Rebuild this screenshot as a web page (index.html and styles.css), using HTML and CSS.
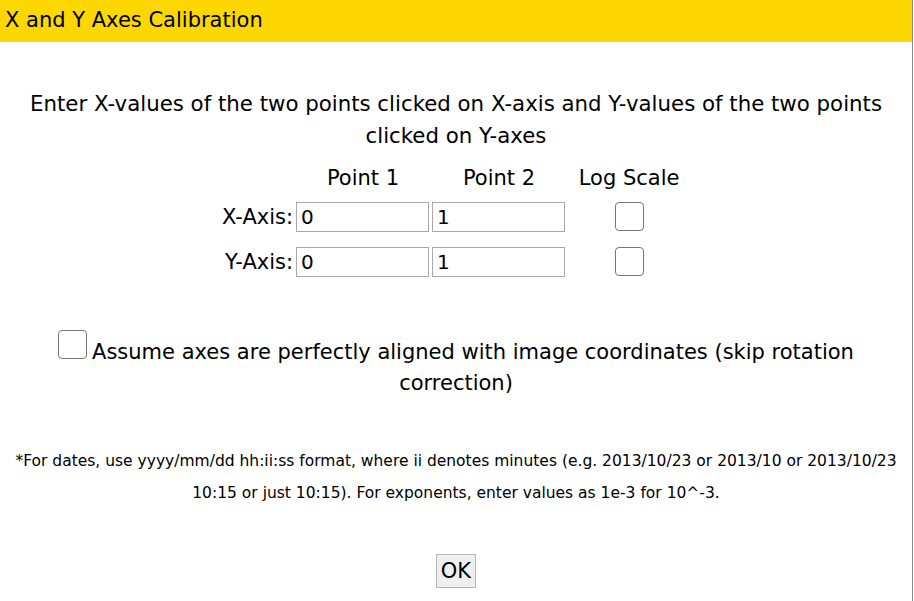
FILE: index.html
```html
<!DOCTYPE html>
<html>
<head>
<meta charset="utf-8">
<link rel="stylesheet" href="styles.css">
</head>
<body>
<div class="dialog">
  <div class="header">X and Y Axes Calibration</div>
  <div class="content">
    <p class="intro">Enter X-values of the two points clicked on X-axis and Y-values of the two points clicked on Y-axes</p>
    <table class="grid">
      <tr class="head">
        <th class="label"></th>
        <th class="col">Point 1</th>
        <th class="col">Point 2</th>
        <th class="logcol">Log Scale</th>
      </tr>
      <tr class="row">
        <td class="label">X-Axis:</td>
        <td><input class="field" type="text" value="0"></td>
        <td><input class="field" type="text" value="1"></td>
        <td class="logcell"><span class="box"></span></td>
      </tr>
      <tr class="row">
        <td class="label">Y-Axis:</td>
        <td><input class="field" type="text" value="0"></td>
        <td><input class="field" type="text" value="1"></td>
        <td class="logcell"><span class="box"></span></td>
      </tr>
    </table>
    <p class="assume"><span class="box inline"></span>Assume axes are perfectly aligned with image coordinates (skip rotation correction)</p>
    <p class="note">*For dates, use yyyy/mm/dd hh:ii:ss format, where ii denotes minutes (e.g. 2013/10/23 or 2013/10 or 2013/10/23 10:15 or just 10:15). For exponents, enter values as 1e-3 for 10^-3.</p>
    <div class="actions"><button class="ok">OK</button></div>
  </div>
</div>
</body>
</html>
```
FILE: styles.css
```css
html, body {
  margin: 0;
  padding: 0;
  background: #ffffff;
}
body {
  font-family: "DejaVu Sans", Verdana, sans-serif;
  color: #000;
}
.dialog {
  width: 912px;
  height: 601px;
  border-right: 1px solid #8a8a8a;
  box-sizing: content-box;
}
.header {
  background: #ffd700;
  height: 42px;
  line-height: 40px;
  font-size: 21px;
  padding-left: 5px;
}
.content {
  text-align: center;
}
.intro {
  font-size: 21.3px;
  line-height: 32px;
  margin: 46px 20px 0;
}
.grid {
  margin: 8px auto 0;
  border-spacing: 2px 0;
  font-size: 21px;
}
.grid th {
  font-weight: normal;
  height: 34px;
  padding: 2px 0 0;
  box-sizing: border-box;
}
.grid td {
  padding: 0;
  height: 45px;
}
.grid .label {
  text-align: right;
  padding: 0 1px 0 2px;
}
.col { width: 134px; }
.grid .logcol {
  width: 124px;
  padding-right: 2px;
}
.field {
  box-sizing: border-box;
  width: 133px;
  height: 30px;
  border: 1px solid #a9a9a9;
  font-family: "DejaVu Sans", Verdana, sans-serif;
  font-size: 20px;
  padding: 0 4px;
  margin: 0;
  display: block;
}
.grid .logcell {
  text-align: center;
  padding-right: 2px;
}
.box {
  display: inline-block;
  width: 27px;
  height: 27px;
  border: 1px solid #767676;
  border-radius: 4px;
  background: #fff;
  vertical-align: middle;
}
.box.inline {
  margin-right: 5px;
  vertical-align: baseline;
}
.assume {
  font-size: 21px;
  line-height: 31px;
  margin: 46px 40px 0;
}
.note {
  font-size: 15.5px;
  line-height: 32px;
  margin: 46px 0 0;
  padding: 0 8px;
}
.actions {
  margin-top: 45px;
}
.ok {
  font-family: "DejaVu Sans", Verdana, sans-serif;
  font-size: 21px;
  background: #efefef;
  border: 1px solid #b5b5b5;
  padding: 4px 4px;
  margin: 0;
}
```
